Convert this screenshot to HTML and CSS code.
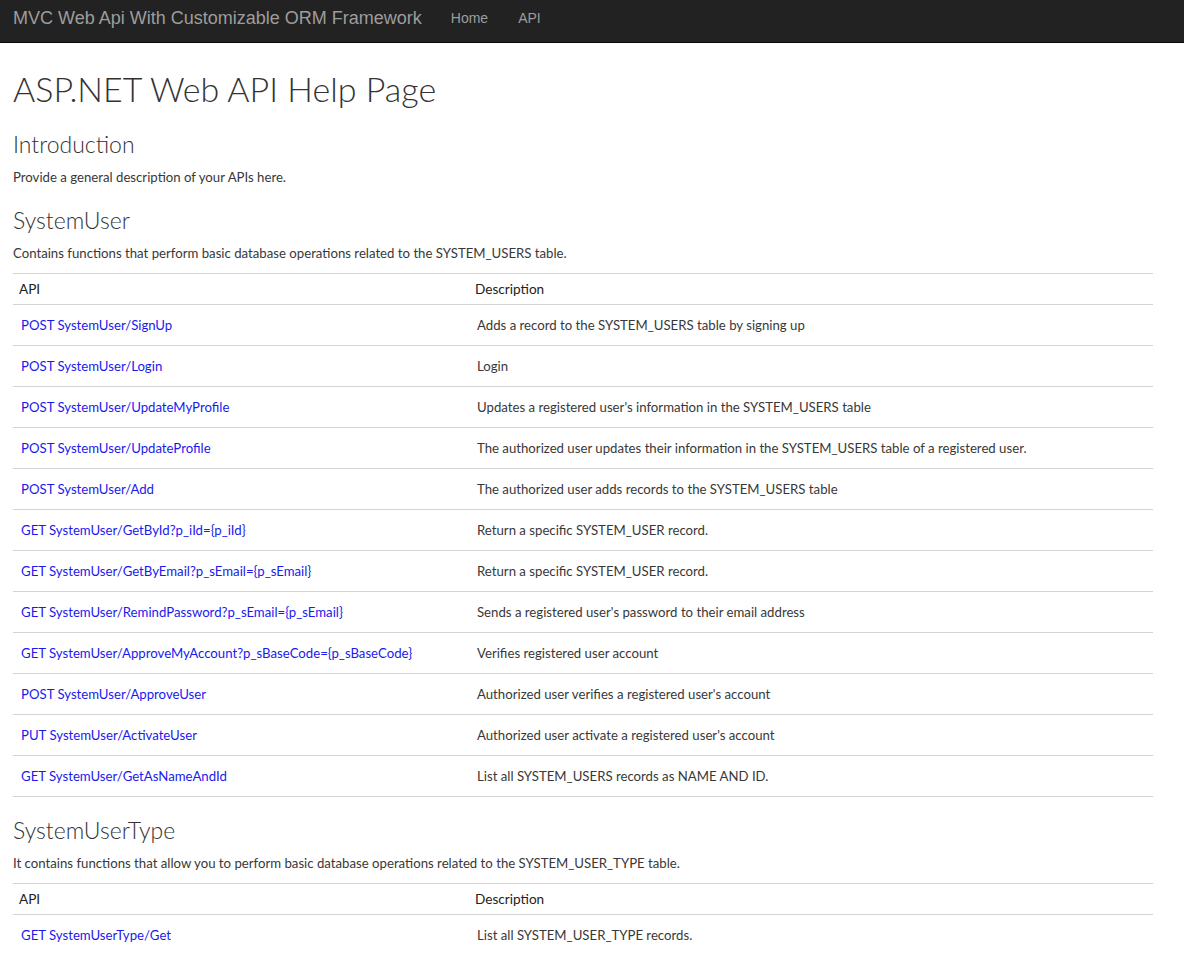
FILE: index.html
```html
<!DOCTYPE html>
<html lang="en">
<head>
<meta charset="utf-8">
<title>ASP.NET Web API Help Page</title>
<link rel="stylesheet" href="styles.css">
</head>
<body>
<nav class="navbar">
  <a class="brand" href="#">MVC Web Api With Customizable ORM Framework</a>
  <ul class="nav">
    <li><a href="#">Home</a></li>
    <li><a href="#">API</a></li>
  </ul>
</nav>
<main class="help-page">
  <h1>ASP.NET Web API Help Page</h1>
  <h2>Introduction</h2>
  <p>Provide a general description of your APIs here.</p>

  <h2>SystemUser</h2>
  <p>Contains functions that perform basic database operations related to the SYSTEM_USERS table.</p>
  <table class="api-table">
    <thead>
      <tr><th class="api-name">API</th><th class="api-documentation">Description</th></tr>
    </thead>
    <tbody>
      <tr><td class="api-name"><a href="#">POST SystemUser/SignUp</a></td><td class="api-documentation">Adds a record to the SYSTEM_USERS table by signing up</td></tr>
      <tr><td class="api-name"><a href="#">POST SystemUser/Login</a></td><td class="api-documentation">Login</td></tr>
      <tr><td class="api-name"><a href="#">POST SystemUser/UpdateMyProfile</a></td><td class="api-documentation">Updates a registered user's information in the SYSTEM_USERS table</td></tr>
      <tr><td class="api-name"><a href="#">POST SystemUser/UpdateProfile</a></td><td class="api-documentation">The authorized user updates their information in the SYSTEM_USERS table of a registered user.</td></tr>
      <tr><td class="api-name"><a href="#">POST SystemUser/Add</a></td><td class="api-documentation">The authorized user adds records to the SYSTEM_USERS table</td></tr>
      <tr><td class="api-name"><a href="#">GET SystemUser/GetById?p_iId={p_iId}</a></td><td class="api-documentation">Return a specific SYSTEM_USER record.</td></tr>
      <tr><td class="api-name"><a href="#">GET SystemUser/GetByEmail?p_sEmail={p_sEmail}</a></td><td class="api-documentation">Return a specific SYSTEM_USER record.</td></tr>
      <tr><td class="api-name"><a href="#">GET SystemUser/RemindPassword?p_sEmail={p_sEmail}</a></td><td class="api-documentation">Sends a registered user's password to their email address</td></tr>
      <tr><td class="api-name"><a href="#">GET SystemUser/ApproveMyAccount?p_sBaseCode={p_sBaseCode}</a></td><td class="api-documentation">Verifies registered user account</td></tr>
      <tr><td class="api-name"><a href="#">POST SystemUser/ApproveUser</a></td><td class="api-documentation">Authorized user verifies a registered user's account</td></tr>
      <tr><td class="api-name"><a href="#">PUT SystemUser/ActivateUser</a></td><td class="api-documentation">Authorized user activate a registered user's account</td></tr>
      <tr><td class="api-name"><a href="#">GET SystemUser/GetAsNameAndId</a></td><td class="api-documentation">List all SYSTEM_USERS records as NAME AND ID.</td></tr>
    </tbody>
  </table>

  <h2>SystemUserType</h2>
  <p>It contains functions that allow you to perform basic database operations related to the SYSTEM_USER_TYPE table.</p>
  <table class="api-table">
    <thead>
      <tr><th class="api-name">API</th><th class="api-documentation">Description</th></tr>
    </thead>
    <tbody>
      <tr><td class="api-name"><a href="#">GET SystemUserType/Get</a></td><td class="api-documentation">List all SYSTEM_USER_TYPE records.</td></tr>
    </tbody>
  </table>
</main>
</body>
</html>
```
FILE: styles.css
```css
html, body {
  margin: 0;
  padding: 0;
  background: #fff;
}
body {
  font-family: "Lato", "Segoe UI", sans-serif;
  font-size: 13.2px;
  line-height: 20px;
  color: #383838;
}
.navbar {
  display: flex;
  align-items: center;
  height: 42px;
  background: #222;
  border-bottom: 1px solid #080808;
  padding: 0 0 0 13px;
  font-family: "Liberation Sans", Arial, sans-serif;
}
.brand {
  font-size: 18px;
  line-height: 20px;
  color: #9d9d9d;
  text-decoration: none;
  margin-top: -6px;
}
.nav {
  display: flex;
  list-style: none;
  margin: -6px 0 0 14px;
  padding: 0;
}
.nav a {
  display: block;
  padding: 0 15px;
  font-size: 14px;
  line-height: 20px;
  color: #9d9d9d;
  text-decoration: none;
}
.help-page {
  width: 1140px;
  padding: 0 0 0 13px;
}
h1, h2 {
  font-family: "Lato", "Segoe UI", sans-serif;
  font-weight: 300;
  color: #333;
}
h1 {
  font-size: 34px;
  line-height: 40px;
  margin: 26px 0 22px;
}
h2 {
  font-size: 23px;
  line-height: 26px;
  margin: 20px 0 10px;
}
p {
  margin: 0 0 10px;
}
.api-table {
  width: 100%;
  border-collapse: collapse;
  border-top: 1px solid #d4d4d4;
  margin: 0 0 20px;
  text-align: left;
}
.api-table th {
  font-weight: normal;
  font-size: 13.6px;
  color: #222;
  padding: 5px 6px;
  border-bottom: 1px solid #d4d4d4;
}
.api-table td {
  padding: 10px 8px;
  border-bottom: 1px solid #d4d4d4;
  vertical-align: top;
}
.api-name {
  width: 40%;
}
.api-documentation {
  width: 60%;
}
.api-table a {
  color: #1a1aee;
  text-decoration: none;
}
```
